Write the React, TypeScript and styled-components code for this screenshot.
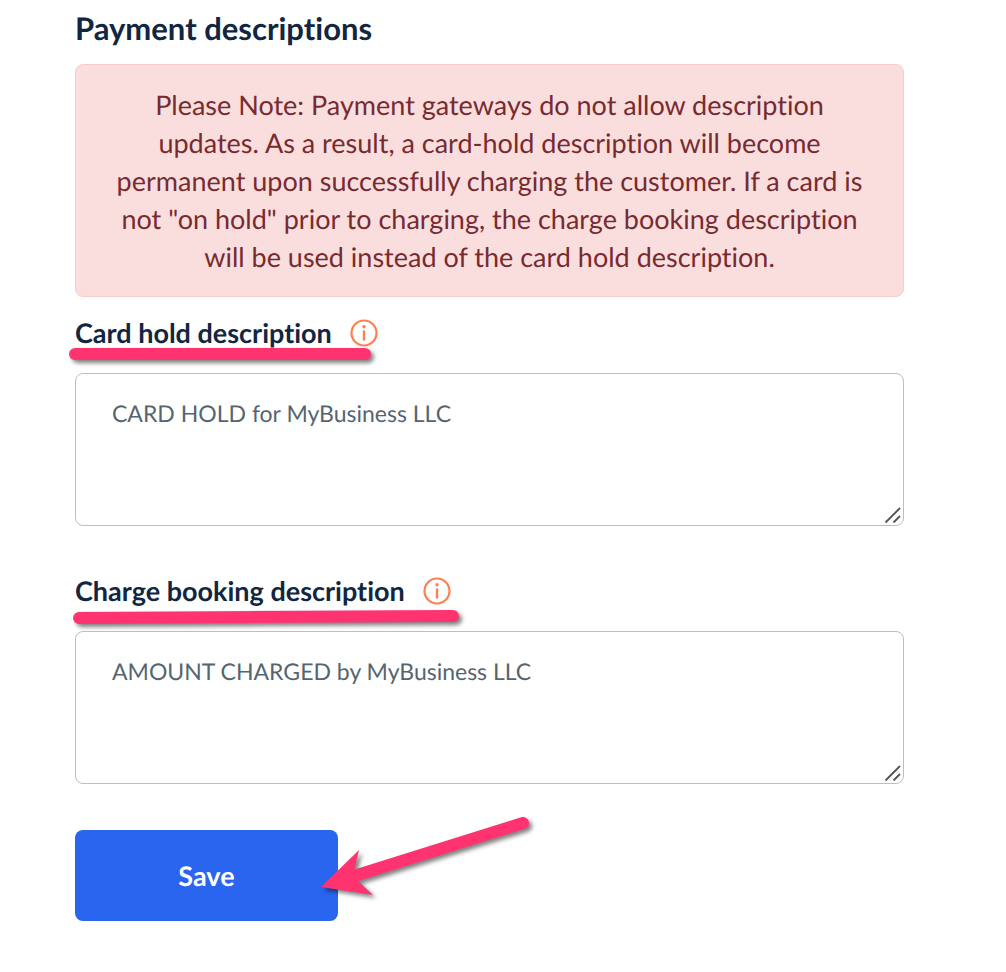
import React from 'react';
import styled, { createGlobalStyle } from 'styled-components';

const GlobalStyle = createGlobalStyle`
  *, *::before, *::after { box-sizing: border-box; }
  body {
    margin: 0;
    background: #ffffff;
    color: #12263f;
    font-family: Lato, "Open Sans", sans-serif;
    font-variant-ligatures: none;
    text-rendering: geometricPrecision;
  }
`;

const Page = styled.main`
  padding: 10px 102px 48px 75px;
`;

const Title = styled.h1`
  margin: 0 0 18px;
  font-size: 31px;
  line-height: 36px;
  font-weight: 700;
`;

const Alert = styled.p`
  margin: 0 0 19px;
  padding: 21px 40px 20px;
  border: 1px solid #f8cdcf;
  border-radius: 8px;
  background: #fadddd;
  color: #772b30;
  font-size: 27px;
  line-height: 38px;
  text-align: center;
`;

const Field = styled.div`
  margin-bottom: 48px;
`;

const LabelRow = styled.div`
  position: relative;
  display: flex;
  align-items: center;
  gap: 18px;
  height: 34px;
  margin-bottom: 23px;
`;

const Label = styled.label`
  font-size: 27px;
  line-height: 34px;
  font-weight: 700;
`;

const InfoButton = styled.button`
  display: flex;
  padding: 0;
  border: 0;
  background: none;
  color: #ff7f50;
  cursor: pointer;
`;

const InputFrame = styled.div`
  position: relative;
  display: flex;
`;

const TextArea = styled.textarea`
  display: block;
  width: 100%;
  height: 153px;
  padding: 21px 36px;
  border: 1px solid #b8bfc5;
  border-radius: 8px;
  outline: none;
  resize: none;
  background: #ffffff;
  color: #55656f;
  font-family: inherit;
  font-size: 23px;
  line-height: 36px;
  font-variant-ligatures: inherit;
  text-rendering: inherit;
`;

const Grip = styled.svg`
  position: absolute;
  right: 2px;
  bottom: 2px;
  pointer-events: none;
`;

const Actions = styled.div`
  position: relative;
  display: flex;
  margin-top: -2px;
`;

const SaveButton = styled.button`
  width: 263px;
  height: 91px;
  padding: 0;
  border: 0;
  border-radius: 8px;
  background: #2a65f0;
  color: #ffffff;
  font-family: inherit;
  font-size: 27px;
  line-height: 36px;
  font-weight: 700;
  text-rendering: inherit;
  cursor: pointer;
`;

const Marker = styled.svg<{ $left: number; $top: number }>`
  position: absolute;
  left: ${({ $left }) => $left}px;
  top: ${({ $top }) => $top}px;
  overflow: visible;
  pointer-events: none;
  filter: drop-shadow(3px 3px 2px rgba(0, 0, 0, 0.5));
`;

const MARKER_COLOR = '#ff336f';

function InfoIcon() {
  return (
    <svg width="28" height="28" viewBox="0 0 28 28" fill="none" stroke="currentColor" strokeWidth="2.2" aria-hidden="true">
      <circle cx="14" cy="14" r="12.5" />
      <path d="M14 12.5V20.5" strokeWidth="2.4" strokeLinecap="round" />
      <circle cx="14" cy="7.8" r="1.7" fill="currentColor" stroke="none" />
    </svg>
  );
}

interface DescriptionFieldProps {
  id: string;
  label: string;
  value: string;
  underline: { left: number; width: number; rise: number; top: number };
}

function DescriptionField({ id, label, value, underline }: DescriptionFieldProps) {
  const { left, width, rise, top } = underline;
  return (
    <Field>
      <LabelRow>
        <Label htmlFor={id}>{label}</Label>
        <InfoButton type="button" aria-label={`About ${label}`}>
          <InfoIcon />
        </InfoButton>
        <Marker $left={left} $top={top} width={width} height="14" aria-hidden="true">
          <path d={`M6 ${6 + rise}L${width - 6} 6`} stroke={MARKER_COLOR} strokeWidth="12" strokeLinecap="round" />
        </Marker>
      </LabelRow>
      <InputFrame>
        <TextArea id={id} defaultValue={value} spellCheck={false} />
        <Grip width="18" height="18" viewBox="0 0 18 18" stroke="#555555" strokeWidth="1.8" aria-hidden="true">
          <path d="M1.5 16.5L16 2M9.5 16.5L16 10" />
        </Grip>
      </InputFrame>
    </Field>
  );
}

export default function App() {
  return (
    <>
      <GlobalStyle />
      <Page>
        <Title>Payment descriptions</Title>
        <Alert role="note">
          Please Note: Payment gateways do not allow description updates. As a result, a card-hold
          description will become permanent upon successfully charging the customer. If a card is
          not "on hold" prior to charging, the charge booking description will be used instead of
          the card hold description.
        </Alert>
        <DescriptionField
          id="card-hold"
          label="Card hold description"
          value="CARD HOLD for MyBusiness LLC"
          underline={{ left: -6, width: 302, rise: 0, top: 32 }}
        />
        <DescriptionField
          id="charge-booking"
          label="Charge booking description"
          value="AMOUNT CHARGED by MyBusiness LLC"
          underline={{ left: -2, width: 386, rise: 2, top: 36 }}
        />
        <Actions>
          <SaveButton type="button">Save</SaveButton>
          <Marker $left={246} $top={-13} width="208" height="78" aria-hidden="true">
            <path d="M202 6L33 59" stroke={MARKER_COLOR} strokeWidth="12" strokeLinecap="round" />
            <path d="M0 70L38 33L33 54L37 64L52 78Z" fill={MARKER_COLOR} />
          </Marker>
        </Actions>
      </Page>
    </>
  );
}
